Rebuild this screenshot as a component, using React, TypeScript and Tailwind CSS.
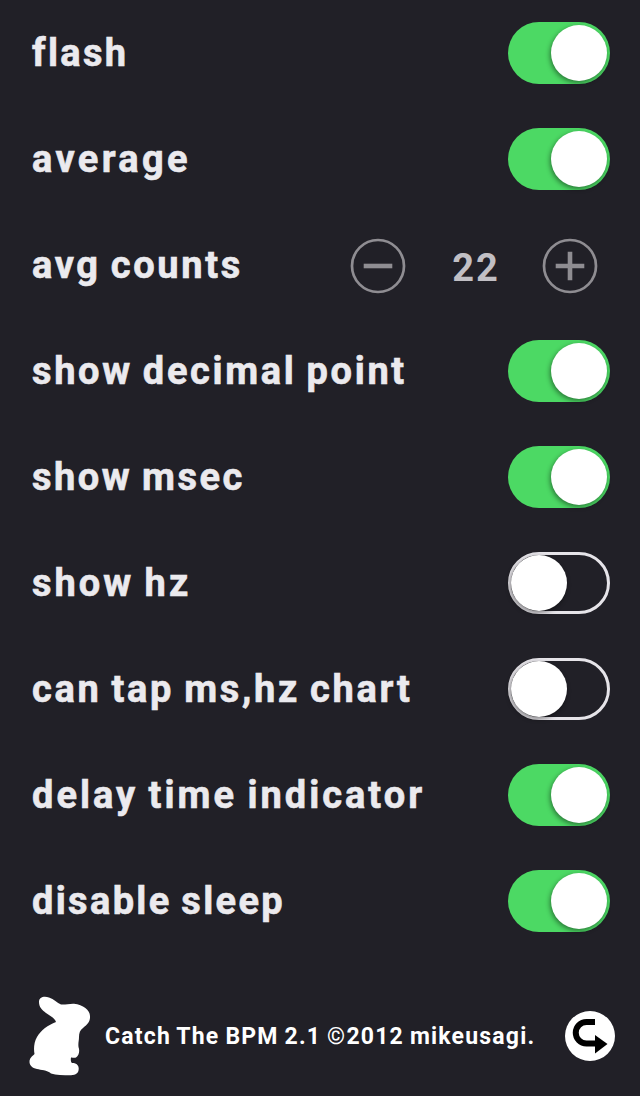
import React from "react";

type Setting = { label: string; tracking: string; on?: boolean; count?: number };

const settings: Setting[] = [
  { label: "flash", tracking: "tracking-[2.3px]", on: true },
  { label: "average", tracking: "tracking-[3.35px]", on: true },
  { label: "avg counts", tracking: "tracking-[2.65px]", count: 22 },
  { label: "show decimal point", tracking: "tracking-[2.65px]", on: true },
  { label: "show msec", tracking: "tracking-[2.5px]", on: true },
  { label: "show hz", tracking: "tracking-[3px]", on: false },
  { label: "can tap ms,hz chart", tracking: "tracking-[2.67px]", on: false },
  { label: "delay time indicator", tracking: "tracking-[3px]", on: true },
  { label: "disable sleep", tracking: "tracking-[2.33px]", on: true },
];

function Toggle({ on }: { on: boolean }) {
  return (
    <button
      role="switch"
      aria-checked={on}
      className={
        on
          ? "flex h-[62px] w-[102px] items-center justify-end rounded-full bg-[#4cd964] p-[3px]"
          : "flex h-[62px] w-[102px] items-center justify-start rounded-full border-[3px] border-[#e6e4e9]"
      }
    >
      <span className="size-14 rounded-full bg-white shadow-[-1px_2px_5px_rgba(0,0,0,0.45)]" />
    </button>
  );
}

function RoundButton({ plus }: { plus?: boolean }) {
  return (
    <button className="size-14">
      <svg viewBox="0 0 56 56" className="size-14" fill="none" stroke="#8f8d92">
        <circle cx="28" cy="28" r="26" strokeWidth="2.7" />
        <path d={plus ? "M13.7 28h28.6M28 13.7v28.6" : "M13.7 28h28.6"} strokeWidth="4.6" />
      </svg>
    </button>
  );
}

function Rabbit() {
  return (
    <svg viewBox="0 0 62 80" className="h-20 w-[62px]" fill="#fff">
      <path d="M10 6C10 1 15 0 20 1.500C25 3 28 7 32 8.500C36 9 40 7.500 45 7.700C54 8.500 61 14 61 20C61.500 26 58 29 54 32C51 34 50 37 50 41C50 45 49 47 49.500 51C51 55 50 60 47 61.500C45 62.500 43 61 42 61.500C41.500 64 42 66 43 67C47 67 50 69 49.700 73C49.500 77 47 79 42 79.300C34 79.300 27 79 22 77.500C18 74 12 74 8 73C3 72 .5 69 .5 66C.5 62 3 60.500 5.500 58C4.500 53 5 46 8 41C12 34 19 29 27 26C26 22 21 20 17 17C13 14 10 11 10 6Z" />
    </svg>
  );
}

export default function App() {
  return (
    <main className="flex h-[1096px] w-[640px] flex-col bg-[#212027] font-['Roboto',sans-serif] font-bold text-[#ebeaee]">
      {settings.map((s) => (
        <div key={s.label} className="flex h-[106px] items-center justify-between pr-[30px] pl-8">
          <span
            className={`text-[38px] leading-none whitespace-nowrap [word-spacing:-2px] [-webkit-text-stroke:0.6px_#ebeaee] ${s.tracking}`}
          >
            {s.label}
          </span>
          {s.count !== undefined ? (
            <div className="flex w-[260px] items-center justify-between pt-0.5 pr-3">
              <RoundButton />
              <span className="pt-1 pl-1 text-[38px] leading-none tracking-[2px] text-[#c1bfc4]">{s.count}</span>
              <RoundButton plus />
            </div>
          ) : (
            <Toggle on={!!s.on} />
          )}
        </div>
      ))}
      <footer className="flex h-[142px] items-center pt-[22px] pr-[25px] pl-[29px] text-white">
        <Rabbit />
        <span className="ml-3.5 flex-1 text-[23px] leading-none tracking-[1.2px] whitespace-nowrap [word-spacing:-1px]">
          Catch The BPM 2.1 ©2012 mikeusagi.
        </span>
        <svg viewBox="0 0 50 50" className="size-[50px]">
          <circle cx="25" cy="25" r="25" fill="#fff" />
          <path d="M30 11H21.500A10.750 10.750 0 0 0 21.500 32.500H31" fill="none" stroke="#000" strokeWidth="6" />
          <path d="M30 24L42.500 33L30 42.500Z" />
        </svg>
      </footer>
    </main>
  );
}
